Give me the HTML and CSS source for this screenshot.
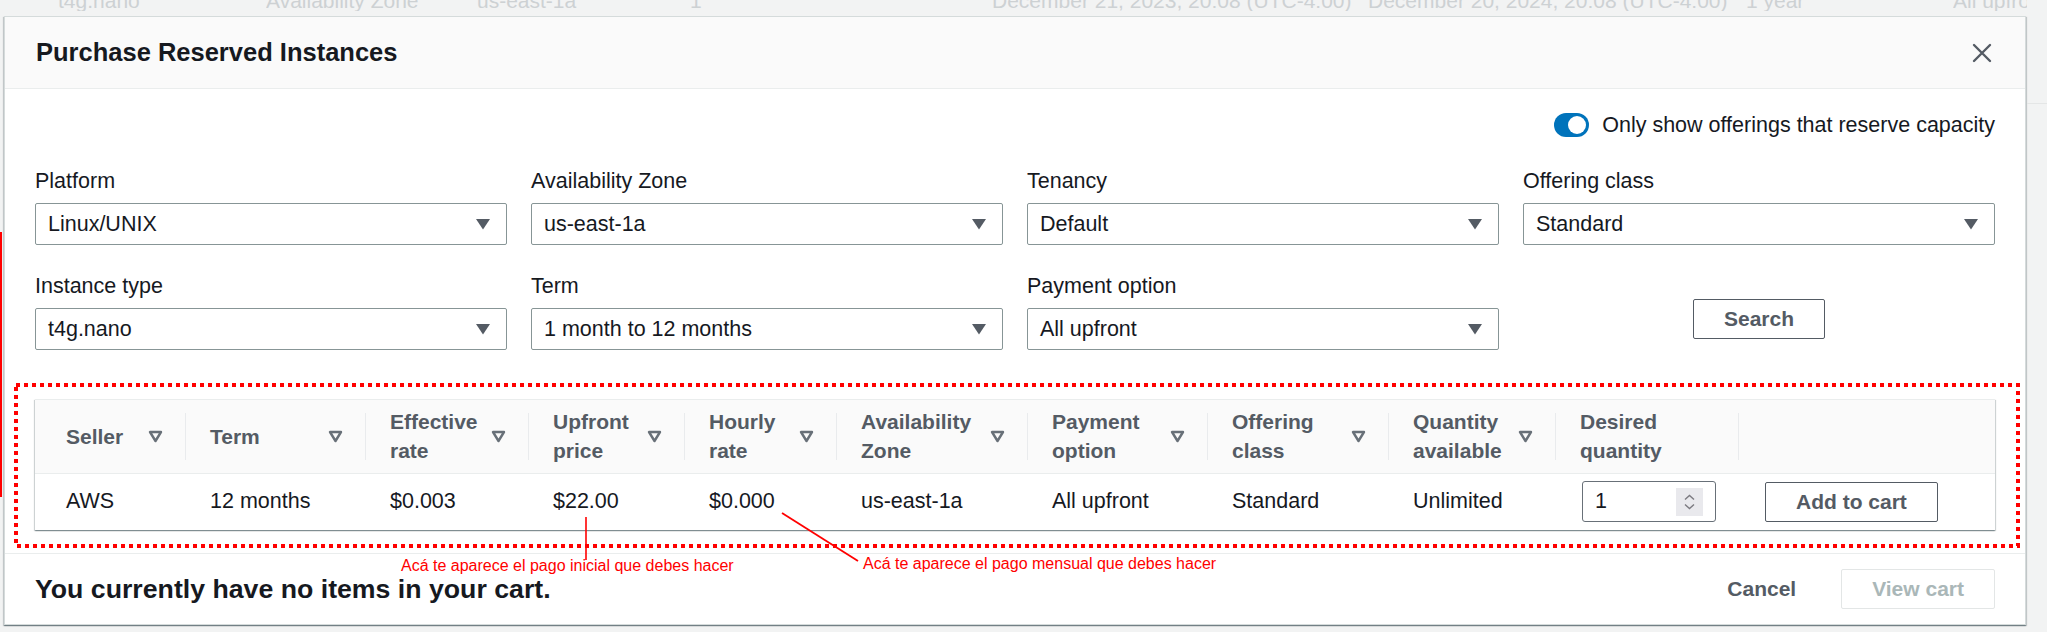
FILE: index.html
```html
<!DOCTYPE html>
<html lang="en">
<head>
<meta charset="utf-8">
<title>Purchase Reserved Instances</title>
<link rel="stylesheet" href="styles.css">
</head>
<body>
<div class="bg-row">
  <div class="bg-line">
    <span class="bg-c w1">t4g.nano</span>
    <span class="bg-c w2">Availability Zone</span>
    <span class="bg-c w3">us-east-1a</span>
    <span class="bg-c w4">1</span>
    <span class="bg-c w5">December 21, 2023, 20:08 (UTC-4:00)</span>
    <span class="bg-c w6">December 20, 2024, 20:08 (UTC-4:00)</span>
    <span class="bg-c w7">1 year</span>
    <span class="bg-c w8">All upfront</span>
  </div>
</div>
<div class="edge-mark"></div>
<div class="side-rule"></div>

<div class="modal">
  <div class="modal-header">
    <h2 class="modal-title">Purchase Reserved Instances</h2>
    <button class="close" aria-label="Close">
      <svg width="20" height="20" viewBox="0 0 20 20"><path d="M2 2L18 18M18 2L2 18" stroke="#545b64" stroke-width="2.4" stroke-linecap="round" fill="none"/></svg>
    </button>
  </div>

  <div class="modal-body">
    <div class="toggle-row">
      <span class="toggle"><span class="knob"></span></span>
      <span class="toggle-label">Only show offerings that reserve capacity</span>
    </div>

    <div class="filters">
      <div class="field">
        <div class="field-label">Platform</div>
        <div class="select"><span>Linux/UNIX</span><svg class="caret" width="16" height="12" viewBox="0 0 16 12"><path d="M1 1H15L8 11.5Z" fill="#545b64"/></svg></div>
      </div>
      <div class="field">
        <div class="field-label">Availability Zone</div>
        <div class="select"><span>us-east-1a</span><svg class="caret" width="16" height="12" viewBox="0 0 16 12"><path d="M1 1H15L8 11.5Z" fill="#545b64"/></svg></div>
      </div>
      <div class="field">
        <div class="field-label">Tenancy</div>
        <div class="select"><span>Default</span><svg class="caret" width="16" height="12" viewBox="0 0 16 12"><path d="M1 1H15L8 11.5Z" fill="#545b64"/></svg></div>
      </div>
      <div class="field">
        <div class="field-label">Offering class</div>
        <div class="select"><span>Standard</span><svg class="caret" width="16" height="12" viewBox="0 0 16 12"><path d="M1 1H15L8 11.5Z" fill="#545b64"/></svg></div>
      </div>
      <div class="field">
        <div class="field-label">Instance type</div>
        <div class="select"><span>t4g.nano</span><svg class="caret" width="16" height="12" viewBox="0 0 16 12"><path d="M1 1H15L8 11.5Z" fill="#545b64"/></svg></div>
      </div>
      <div class="field">
        <div class="field-label">Term</div>
        <div class="select"><span>1 month to 12 months</span><svg class="caret" width="16" height="12" viewBox="0 0 16 12"><path d="M1 1H15L8 11.5Z" fill="#545b64"/></svg></div>
      </div>
      <div class="field">
        <div class="field-label">Payment option</div>
        <div class="select"><span>All upfront</span><svg class="caret" width="16" height="12" viewBox="0 0 16 12"><path d="M1 1H15L8 11.5Z" fill="#545b64"/></svg></div>
      </div>
      <div class="field field-action">
        <button class="btn">Search</button>
      </div>
    </div>

    <div class="table-wrap">
      <table class="offers">
        <colgroup>
          <col style="width:151px"><col style="width:180px"><col style="width:163px"><col style="width:156px"><col style="width:152px"><col style="width:191px"><col style="width:180px"><col style="width:181px"><col style="width:167px"><col style="width:183px"><col style="width:256px">
        </colgroup>
        <thead>
          <tr>
            <th><div class="th-in"><span>Seller</span><svg class="sort" width="15" height="13" viewBox="0 0 15 13"><path d="M2 2H13L7.5 11Z" fill="none" stroke="#687078" stroke-width="2.4" stroke-linejoin="round"/></svg></div></th>
            <th><div class="th-in"><span>Term</span><svg class="sort" width="15" height="13" viewBox="0 0 15 13"><path d="M2 2H13L7.5 11Z" fill="none" stroke="#687078" stroke-width="2.4" stroke-linejoin="round"/></svg></div></th>
            <th><div class="th-in"><span>Effective rate</span><svg class="sort" width="15" height="13" viewBox="0 0 15 13"><path d="M2 2H13L7.5 11Z" fill="none" stroke="#687078" stroke-width="2.4" stroke-linejoin="round"/></svg></div></th>
            <th><div class="th-in"><span>Upfront price</span><svg class="sort" width="15" height="13" viewBox="0 0 15 13"><path d="M2 2H13L7.5 11Z" fill="none" stroke="#687078" stroke-width="2.4" stroke-linejoin="round"/></svg></div></th>
            <th><div class="th-in"><span>Hourly rate</span><svg class="sort" width="15" height="13" viewBox="0 0 15 13"><path d="M2 2H13L7.5 11Z" fill="none" stroke="#687078" stroke-width="2.4" stroke-linejoin="round"/></svg></div></th>
            <th><div class="th-in"><span>Availability Zone</span><svg class="sort" width="15" height="13" viewBox="0 0 15 13"><path d="M2 2H13L7.5 11Z" fill="none" stroke="#687078" stroke-width="2.4" stroke-linejoin="round"/></svg></div></th>
            <th><div class="th-in"><span>Payment option</span><svg class="sort" width="15" height="13" viewBox="0 0 15 13"><path d="M2 2H13L7.5 11Z" fill="none" stroke="#687078" stroke-width="2.4" stroke-linejoin="round"/></svg></div></th>
            <th><div class="th-in"><span>Offering class</span><svg class="sort" width="15" height="13" viewBox="0 0 15 13"><path d="M2 2H13L7.5 11Z" fill="none" stroke="#687078" stroke-width="2.4" stroke-linejoin="round"/></svg></div></th>
            <th><div class="th-in"><span>Quantity available</span><svg class="sort" width="15" height="13" viewBox="0 0 15 13"><path d="M2 2H13L7.5 11Z" fill="none" stroke="#687078" stroke-width="2.4" stroke-linejoin="round"/></svg></div></th>
            <th><div class="th-in"><span>Desired quantity</span></div></th>
            <th class="th-last"></th>
          </tr>
        </thead>
        <tbody>
          <tr>
            <td>AWS</td>
            <td>12 months</td>
            <td>$0.003</td>
            <td>$22.00</td>
            <td>$0.000</td>
            <td>us-east-1a</td>
            <td>All upfront</td>
            <td>Standard</td>
            <td>Unlimited</td>
            <td class="td-qty">
              <div class="num-input"><span>1</span>
                <svg class="spin" width="27" height="28" viewBox="0 0 27 28"><rect width="27" height="28" fill="#e9e9ed"/><path d="M9 11.5L13.5 7.5L18 11.5M9 16.5L13.5 20.5L18 16.5" fill="none" stroke="#7b7a80" stroke-width="1.4"/></svg>
              </div>
            </td>
            <td class="td-act"><button class="btn">Add to cart</button></td>
          </tr>
        </tbody>
      </table>
    </div>
  </div>

  <div class="modal-footer">
    <h2 class="cart-title">You currently have no items in your cart.</h2>
    <div class="footer-actions">
      <button class="btn btn-link">Cancel</button>
      <button class="btn btn-disabled">View cart</button>
    </div>
  </div>
</div>

<svg class="annot" width="2047" height="632" viewBox="0 0 2047 632">
  <rect x="16" y="385" width="2002" height="161" fill="none" stroke="#ff0000" stroke-width="4" stroke-dasharray="4 4"/>
  <line x1="586" y1="517" x2="586" y2="560" stroke="#ff0000" stroke-width="1.6"/>
  <line x1="782" y1="513" x2="858" y2="561" stroke="#ff0000" stroke-width="1.8"/>
</svg>
<div class="note note-1">Acá te aparece el pago inicial que debes hacer</div>
<div class="note note-2">Acá te aparece el pago mensual que debes hacer</div>
</body>
</html>
```

FILE: styles.css
```css
* { box-sizing: border-box; }

body {
  margin: 0;
  width: 2047px;
  height: 632px;
  overflow: hidden;
  position: relative;
  background: #f2f3f3;
  font-family: "Liberation Sans", Arial, sans-serif;
  color: #16191f;
}

/* faded page row behind the modal */
.bg-row {
  height: 16px;
  overflow: hidden;
}
.bg-line {
  display: flex;
  margin-top: -10px;
  padding-left: 58px;
  font-size: 21px;
  line-height: 21px;
  color: #cdd1d3;
  white-space: nowrap;
}
.bg-c { flex: none; overflow: hidden; }
.w1 { width: 208px; }
.w2 { width: 211px; }
.w3 { width: 213px; }
.w4 { width: 302px; }
.w5 { width: 376px; }
.w6 { width: 378px; }
.w7 { width: 207px; }
.w8 { width: 74px; }

.edge-mark {
  position: absolute;
  left: 0;
  top: 232px;
  width: 2px;
  height: 265px;
  background: #ff0000;
}
.side-rule {
  position: absolute;
  left: 2027px;
  top: 103px;
  width: 20px;
  height: 1px;
  background: #e4e6e6;
}

/* modal */
.modal {
  margin-left: 4px;
  width: 2022px;
  background: #ffffff;
  border: 1px solid #d5dbdb;
  box-shadow: 0 1px 1px 0 rgba(0, 28, 36, 0.35), 1px 1px 1px 0 rgba(0, 28, 36, 0.15), -1px 1px 1px 0 rgba(0, 28, 36, 0.15);
}

.modal-header {
  height: 72px;
  background: #fafafa;
  border-bottom: 1px solid #eaeded;
  display: flex;
  align-items: center;
  justify-content: space-between;
  padding: 0 33px 0 31px;
}
.modal-title {
  margin: 0;
  font-size: 25.5px;
  font-weight: 700;
  color: #16191f;
}
.close {
  border: 0;
  background: none;
  padding: 0;
  width: 20px;
  height: 20px;
  display: flex;
}

.modal-body {
  padding: 24px 30px 23px 30px;
}

.toggle-row {
  display: flex;
  justify-content: flex-end;
  align-items: center;
  gap: 13px;
  height: 24px;
}
.toggle {
  width: 35px;
  height: 24px;
  border-radius: 12px;
  background: #0073bb;
  display: flex;
  align-items: center;
  justify-content: flex-end;
  padding-right: 3px;
}
.knob {
  width: 18px;
  height: 18px;
  border-radius: 50%;
  background: #ffffff;
}
.toggle-label {
  font-size: 21.5px;
  color: #16191f;
}

.filters {
  margin-top: 30px;
  display: grid;
  grid-template-columns: repeat(4, 1fr);
  column-gap: 24px;
  row-gap: 27px;
}
.field-label {
  font-size: 21.5px;
  line-height: 28px;
  margin-bottom: 8px;
  color: #16191f;
}
.select {
  height: 42px;
  border: 1px solid #879596;
  border-radius: 2px;
  display: flex;
  align-items: center;
  justify-content: space-between;
  padding: 0 15px 0 12px;
  font-size: 21.5px;
  color: #16191f;
}
.caret { flex: none; }
.field-action {
  display: flex;
  justify-content: center;
  align-items: flex-start;
  padding-top: 27px;
}

.btn {
  height: 40px;
  padding: 0 30px;
  border: 1px solid #545b64;
  border-radius: 2px;
  background: #ffffff;
  font-family: "Liberation Sans", Arial, sans-serif;
  font-size: 21px;
  font-weight: 700;
  color: #545b64;
  white-space: nowrap;
}
.btn-link {
  border-color: transparent;
}
.btn-disabled {
  border-color: #e3e6e6;
  color: #aab7b8;
}

/* table */
.table-wrap {
  margin-top: 49px;
  background: #ffffff;
  border-top: 1px solid #eaeded;
  box-shadow: 0 1px 1px 0 rgba(0, 28, 36, 0.3), 1px 1px 1px 0 rgba(0, 28, 36, 0.15), -1px 1px 1px 0 rgba(0, 28, 36, 0.15);
}
.offers {
  width: 100%;
  border-collapse: collapse;
  table-layout: fixed;
}
.offers thead tr {
  height: 73px;
  background: #fafafa;
  border-bottom: 1px solid #eaeded;
}
.offers th {
  position: relative;
  padding: 0 23px 0 24px;
  text-align: left;
  vertical-align: middle;
  font-size: 21px;
  line-height: 29px;
  font-weight: 700;
  color: #545b64;
}
.offers th:first-child,
.offers td:first-child {
  padding-left: 31px;
}
.offers th::after {
  content: "";
  position: absolute;
  right: 0;
  top: 13px;
  bottom: 13px;
  width: 1px;
  background: #e9ebed;
}
.offers th.th-last::after { display: none; }
.th-in {
  display: flex;
  align-items: center;
  justify-content: space-between;
  gap: 8px;
}
.sort { flex: none; }

.offers tbody tr { height: 57px; }
.offers td {
  padding: 0 24px;
  vertical-align: middle;
  font-size: 21.5px;
  color: #16191f;
  white-space: nowrap;
}
.offers td.td-qty { padding-left: 26px; padding-right: 0; }
.offers td.td-act { padding-left: 26px; padding-right: 0; }

.num-input {
  width: 134px;
  height: 41px;
  border: 1px solid #687078;
  border-radius: 3px;
  display: flex;
  align-items: center;
  justify-content: space-between;
  padding: 0 12px 0 12px;
  font-size: 21.5px;
  color: #16191f;
}
.spin { flex: none; }

/* footer */
.modal-footer {
  height: 71px;
  border-top: 1px solid #eaeded;
  display: flex;
  align-items: center;
  justify-content: space-between;
  padding: 0 30px;
}
.cart-title {
  margin: 0;
  font-size: 26.7px;
  font-weight: 700;
  color: #16191f;
}
.footer-actions {
  display: flex;
  align-items: center;
  gap: 14px;
}

/* annotations drawn over the screenshot */
.annot {
  position: absolute;
  left: 0;
  top: 0;
  pointer-events: none;
}
.note {
  position: absolute;
  font-family: "Liberation Sans", Arial, sans-serif;
  font-size: 16px;
  line-height: 18px;
  color: #ff0000;
  white-space: nowrap;
}
.note-1 { left: 401px; top: 557px; }
.note-2 { left: 863px; top: 555px; }
```
